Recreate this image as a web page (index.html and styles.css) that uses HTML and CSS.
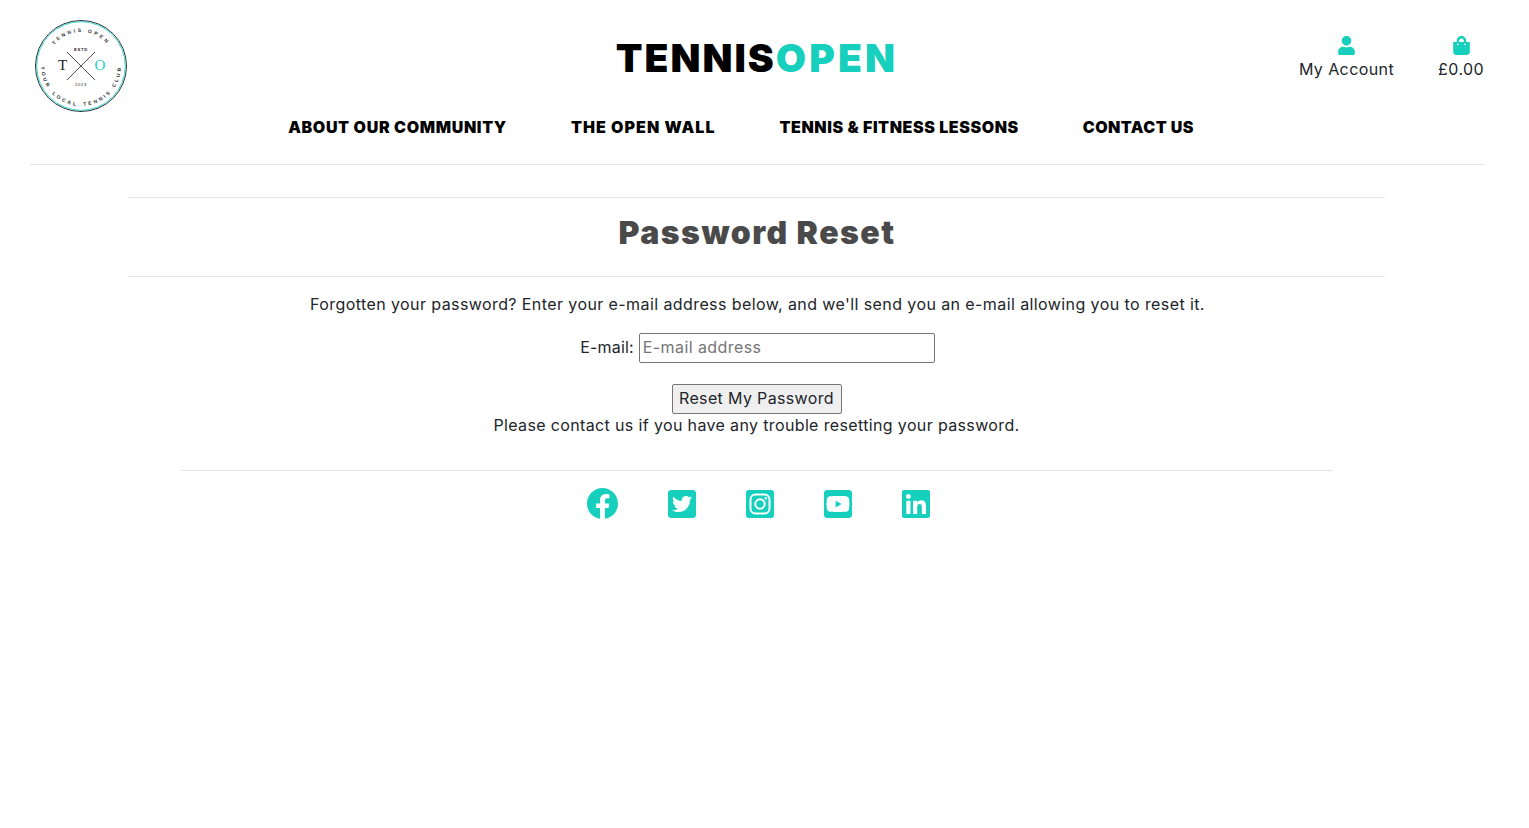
FILE: index.html
```html
<!DOCTYPE html>
<html lang="en">
<head>
<meta charset="utf-8">
<title>Password Reset | Tennis Open</title>
<link rel="stylesheet" href="styles.css">
</head>
<body>
<div class="page">
  <header class="site-header">
    <div class="top-row">
      <div class="side side-left">
        <a class="logo" href="#" aria-label="Tennis Open">
          <svg viewBox="0 0 92 92" width="92" height="92">
            <defs>
              <path id="arc-top" d="M12 46a34 34 0 0 1 68 0"/>
              <path id="arc-bottom" d="M6 46a40 40 0 0 0 80 0"/>
            </defs>
            <circle class="ring-dark" cx="46" cy="46" r="45.500"/>
            <circle class="ring-teal" cx="46" cy="46" r="44.300"/>
            <text class="logo-arc"><textPath href="#arc-top" startOffset="50%" text-anchor="middle">TENNIS OPEN</textPath></text>
            <text class="logo-arc arc-low"><textPath href="#arc-bottom" startOffset="10%" text-anchor="middle">YOUR</textPath></text>
            <text class="logo-arc arc-low"><textPath href="#arc-bottom" startOffset="36%" text-anchor="middle">LOCAL</textPath></text>
            <text class="logo-arc arc-low"><textPath href="#arc-bottom" startOffset="65%" text-anchor="middle">TENNIS</textPath></text>
            <text class="logo-arc arc-low"><textPath href="#arc-bottom" startOffset="91%" text-anchor="middle">CLUB</textPath></text>
            <text class="logo-small" x="46" y="30.500">ESTD</text>
            <text class="logo-small thin" x="46" y="65.500">2023</text>
            <line class="logo-cross" x1="32" y1="32" x2="60" y2="60"/>
            <line class="logo-cross" x1="60" y1="32" x2="32" y2="60"/>
            <text class="logo-letter" x="27.500" y="50">T</text>
            <text class="logo-letter teal" x="65" y="50">O</text>
          </svg>
        </a>
      </div>
      <h1 class="brand">TENNIS<span class="teal-text">OPEN</span></h1>
      <div class="side side-right">
        <a class="account-link" href="#">
          <svg class="account-icon" viewBox="0 0 448 512"><path d="M224 256c70.700 0 128-57.300 128-128S294.700 0 224 0 96 57.300 96 128s57.300 128 128 128zm89.600 32h-16.700c-22.200 10.200-46.900 16-73.900 16s-51.600-5.800-73.900-16h-16.700C60.200 288 0 348.200 0 422.400V464c0 26.500 21.500 48 48 48h352c26.500 0 48-21.500 48-48v-41.600c0-74.200-60.200-134.400-134.400-134.400z"/></svg>
          <span>My Account</span>
        </a>
        <a class="account-link" href="#">
          <svg class="account-icon" viewBox="0 0 448 512"><path d="M352 160v-32C352 57.420 294.579 0 224 0 153.420 0 96 57.420 96 128v32H0v272c0 44.183 35.817 80 80 80h288c44.183 0 80-35.817 80-80V160h-96zm-192-32c0-35.290 28.710-64 64-64s64 28.710 64 64v32H160v-32zm160 120c-13.255 0-24-10.745-24-24s10.745-24 24-24 24 10.745 24 24-10.745 24-24 24zm-192 0c-13.255 0-24-10.745-24-24s10.745-24 24-24 24 10.745 24 24-10.745 24-24 24z"/></svg>
          <span>£0.00</span>
        </a>
      </div>
    </div>
    <nav class="main-nav">
      <a class="nav-about" href="#">ABOUT OUR COMMUNITY</a>
      <a class="nav-wall" href="#">THE OPEN WALL</a>
      <a class="nav-lessons" href="#">TENNIS &amp; FITNESS LESSONS</a>
      <a class="nav-contact" href="#">CONTACT US</a>
    </nav>
  </header>

  <main class="content">
    <h2 class="page-title">Password Reset</h2>
    <p class="intro">Forgotten your password? Enter your e-mail address below, and we'll send you an e-mail allowing you to reset it.</p>
    <form class="reset-form">
      <p class="field"><label for="email">E-mail:</label> <input id="email" type="email" placeholder="E-mail address"></p>
      <button type="button">Reset My Password</button>
    </form>
    <p class="help">Please contact us if you have any trouble resetting your password.</p>
  </main>

  <footer class="site-footer">
    <a href="#" aria-label="Facebook"><svg class="social fb" viewBox="8 8 496 496"><path d="M504 256C504 119 393 8 256 8S8 119 8 256c0 123.780 90.690 226.380 209.250 245V327.690h-63V256h63v-54.640c0-62.150 37-96.480 93.670-96.480 27.140 0 55.520 4.840 55.520 4.840v61h-31.280c-30.800 0-40.410 19.120-40.410 38.730V256h68.780l-11 71.690h-57.780V501C413.310 482.380 504 379.780 504 256z"/></svg></a>
    <a href="#" aria-label="Twitter"><svg class="social" viewBox="0 32 448 448"><path d="M400 32H48C21.500 32 0 53.500 0 80v352c0 26.500 21.500 48 48 48h352c26.500 0 48-21.500 48-48V80c0-26.500-21.500-48-48-48zm-48.900 158.800c.2 2.800.2 5.700.2 8.500 0 86.700-66 186.600-186.600 186.600-37.200 0-71.700-10.800-100.700-29.400 5.300.6 10.400.8 15.800.8 30.700 0 58.900-10.400 81.400-28-28.800-.6-53-19.500-61.300-45.500 10.100 1.500 19.200 1.500 29.600-1.200-30-6.100-52.500-32.500-52.500-64.400v-.8c8.700 4.900 18.900 7.900 29.600 8.300a65.447 65.447 0 0 1-29.200-54.600c0-12.200 3.200-23.400 8.900-33.100 32.300 39.800 80.800 65.800 135.200 68.600-9.300-44.500 24-80.600 64-80.600 18.900 0 35.900 7.900 47.900 20.700 14.800-2.800 29-8.300 41.600-15.800-4.900 15.200-15.100 28-28.600 36 13.100-1.400 25.800-5.100 37.600-10.200-8.900 13.100-20.100 24.700-32.900 34z"/></svg></a>
    <a href="#" aria-label="Instagram"><svg class="social" viewBox="0 0 28 28"><rect width="28" height="28" rx="3"/><rect class="ig-line" x="4.500" y="4.500" width="19" height="19" rx="5"/><circle class="ig-line" cx="14" cy="14" r="4.700"/><circle class="ig-dot" cx="19.800" cy="8.200" r="1.200"/></svg></a>
    <a href="#" aria-label="YouTube"><svg class="social" viewBox="0 32 448 448"><path d="M186.800 202.100l95.200 54.100-95.200 54.100V202.100zM448 80v352c0 26.500-21.500 48-48 48H48c-26.500 0-48-21.500-48-48V80c0-26.500 21.500-48 48-48h352c26.500 0 48 21.500 48 48zm-42 176.300s0-59.600-7.600-88.200c-4.200-15.800-16.500-28.200-32.200-32.400C337.900 128 224 128 224 128s-113.900 0-142.200 7.700c-15.700 4.200-28 16.600-32.200 32.400-7.600 28.500-7.600 88.200-7.600 88.200s0 59.600 7.600 88.200c4.200 15.800 16.500 27.700 32.200 31.900C110.100 384 224 384 224 384s113.900 0 142.200-7.700c15.700-4.200 28-16.100 32.200-31.900 7.600-28.500 7.600-88.100 7.600-88.100z"/></svg></a>
    <a href="#" aria-label="LinkedIn"><svg class="social" viewBox="0 32 448 448"><path d="M416 32H31.900C14.300 32 0 46.500 0 64.300v383.400C0 465.500 14.300 480 31.900 480H416c17.600 0 32-14.500 32-32.300V64.300c0-17.800-14.400-32.300-32-32.300zM135.400 416H69V202.200h66.500V416zm-33.200-243c-21.300 0-38.500-17.300-38.500-38.500S80.900 96 102.200 96c21.200 0 38.500 17.300 38.500 38.500 0 21.300-17.200 38.500-38.500 38.500zm282.100 243h-66.400V312c0-24.800-.5-56.700-34.500-56.700-34.600 0-39.900 27-39.900 54.900V416h-66.400V202.200h63.700v29.200h.9c8.900-16.800 30.600-34.500 62.900-34.500 67.200 0 79.700 44.300 79.700 101.900V416z"/></svg></a>
  </footer>
</div>
</body>
</html>
```
FILE: styles.css
```css
* { box-sizing: border-box; }
html, body { margin: 0; padding: 0; background: #fff; }
body {
  font-family: Inter, "Liberation Sans", sans-serif;
  font-size: 16px;
  color: #212529;
  letter-spacing: 0.41px;
}
a { color: inherit; text-decoration: none; }
.page { width: 1514px; padding: 0 30px; }

.site-header { height: 165px; border-bottom: 1px solid #e5e5e5; padding-top: 20px; }
.top-row { display: flex; align-items: flex-start; height: 92px; }
.side { flex: 1 1 0; display: flex; }
.side-left { padding-left: 5px; }
.side-right { justify-content: flex-end; gap: 44px; padding-top: 16px; }
.logo { display: block; width: 92px; height: 92px; }
.ring-dark { fill: #fff; stroke: #24323a; stroke-width: 1; }
.ring-teal { fill: none; stroke: #16cfbc; stroke-width: 0.8; }
.logo-arc { font-family: "Liberation Sans", sans-serif; font-size: 5px; font-weight: 700; letter-spacing: 2.5px; fill: #333; }
.arc-low { letter-spacing: 2.4px; }
.logo-small { font-family: "Liberation Sans", sans-serif; font-size: 4.200px; font-weight: 700; letter-spacing: 0.7px; fill: #222; text-anchor: middle; }
.logo-small.thin { font-weight: 400; }
.logo-cross { stroke: #222; stroke-width: 0.8; }
.logo-letter { font-family: "Liberation Serif", serif; font-size: 15px; fill: #222; text-anchor: middle; letter-spacing: 0; }
.logo-letter.teal { fill: #16cfbc; }

.brand {
  margin: 16px 5px 0 0;
  font-size: 39px;
  line-height: 44px;
  font-weight: 900;
  color: #000;
  letter-spacing: 2px;
  white-space: nowrap;
}
.teal-text { color: #16cfbc; letter-spacing: 3.2px; }

.account-link { display: flex; flex-direction: column; align-items: center; color: #212529; }
.account-link span { line-height: 24px; margin-top: 2px; }
.account-icon { width: 17px; height: 19px; fill: #16cfbc; display: block; }

.main-nav { display: flex; justify-content: center; gap: 64px; padding-right: 32px; margin-top: 5px; }
.main-nav a { font-size: 16px; line-height: 20px; font-weight: 900; color: #000; }
.nav-about { letter-spacing: 0.66px; }
.nav-wall { letter-spacing: 1.05px; }
.nav-lessons { letter-spacing: 0.58px; }
.nav-contact { letter-spacing: 0.46px; }

.content { width: 1257px; margin: 32px 0 0 98px; text-align: center; }
.page-title {
  margin: 0;
  height: 80px;
  padding-left: 1px;
  border-top: 1px solid #e5e5e5;
  border-bottom: 1px solid #e5e5e5;
  font-size: 32px;
  line-height: 70px;
  font-weight: 900;
  color: #4a4a4a;
  letter-spacing: 1.5px;
}
.intro { margin: 15px 0 0; padding-left: 2px; line-height: 24px; }
.reset-form { margin-top: 17px; }
.field { margin: 0 0 21px; padding-left: 2px; line-height: 28px; height: 30px; }
.field label { letter-spacing: 0.2px; }
input {
  width: 296px;
  height: 30px;
  padding: 0 3px 2px;
  border: 1px solid #767676;
  border-radius: 2px;
  font: inherit;
  letter-spacing: inherit;
  vertical-align: top;
}
input::placeholder { color: #757575; }
button {
  display: block;
  width: 170px;
  height: 30px;
  margin: 0 auto;
  padding: 0 0 2px;
  border: 1px solid #767676;
  border-radius: 2px;
  background: #efefef;
  color: #212529;
  font: inherit;
  letter-spacing: 0.35px;
}
.help { margin: -1px 0 0; line-height: 24px; letter-spacing: 0.36px; }

.site-footer {
  width: 1152px;
  margin: 33px auto 0;
  padding: 17px 0 0 2px;
  border-top: 1px solid #e5e5e5;
  display: flex;
  justify-content: center;
  gap: 50px;
}
.site-footer a { display: block; }
.social { width: 28px; height: 28px; fill: #16cfbc; display: block; margin-top: 2px; }
.social.fb { width: 31px; height: 31px; margin-top: 0; }
.ig-line { fill: none; stroke: #fff; stroke-width: 2; }
.ig-dot { fill: #fff; }
```
